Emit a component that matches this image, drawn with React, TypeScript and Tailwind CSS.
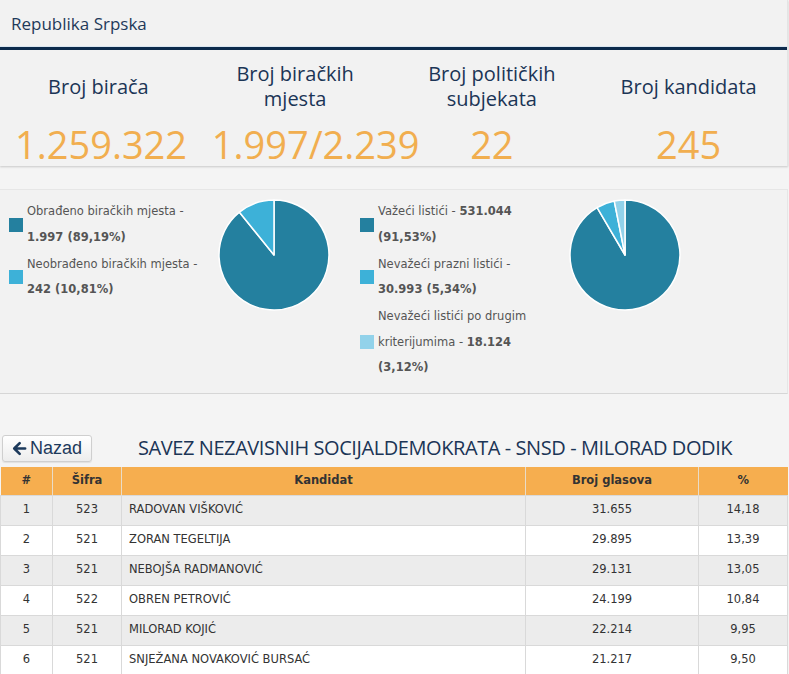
import React from "react";

type Slice = { v: number; c: string };

function Pie({ slices }: { slices: Slice[] }) {
  const cx = 56, cy = 56, r = 55;
  let a = -Math.PI / 2;
  const total = slices.reduce((s, x) => s + x.v, 0);
  const paths = slices.map((s, i) => {
    const da = (s.v / total) * Math.PI * 2;
    const x0 = cx + r * Math.cos(a), y0 = cy + r * Math.sin(a);
    const a1 = a + da;
    const x1 = cx + r * Math.cos(a1), y1 = cy + r * Math.sin(a1);
    const large = da > Math.PI ? 1 : 0;
    a = a1;
    return (
      <path
        key={i}
        d={`M${cx} ${cy} L${x0.toFixed(3)} ${y0.toFixed(3)} A${r} ${r} 0 ${large} 1 ${x1.toFixed(3)} ${y1.toFixed(3)} Z`}
        fill={s.c}
        stroke="#ffffff"
        strokeWidth={1.5}
        strokeLinejoin="round"
      />
    );
  });
  return (
    <svg width={112} height={112} viewBox="0 0 112 112" className="shrink-0">
      {paths}
    </svg>
  );
}

function LegendItem({ color, children }: { color: string; children: React.ReactNode }) {
  return (
    <div className="flex items-center">
      <div className="w-[14px] h-[14px] shrink-0" style={{ background: color }} />
      <div className="ml-[4px] leading-[25.5px]">{children}</div>
    </div>
  );
}

const rows = [
  ["1", "523", "RADOVAN VIŠKOVIĆ", "31.655", "14,18"],
  ["2", "521", "ZORAN TEGELTIJA", "29.895", "13,39"],
  ["3", "521", "NEBOJŠA RADMANOVIĆ", "29.131", "13,05"],
  ["4", "522", "OBREN PETROVIĆ", "24.199", "10,84"],
  ["5", "521", "MILORAD KOJIĆ", "22.214", "9,95"],
  ["6", "521", "SNJEŽANA NOVAKOVIĆ BURSAĆ", "21.217", "9,50"],
];

const DARK = "#24809f";
const MID = "#3db1d8";
const LIGHT = "#92d2ea";

export default function App() {
  const stats = [
    { label: ["Broj birača"], value: "1.259.322" },
    { label: ["Broj biračkih", "mjesta"], value: "1.997/2.239" },
    { label: ["Broj političkih", "subjekata"], value: "22" },
    { label: ["Broj kandidata"], value: "245" },
  ];
  return (
    <div className="w-[789px] h-[674px] overflow-hidden bg-[#f4f4f4] font-['Open_Sans',sans-serif]">
      {/* Top panel */}
      <div className="w-[788px] h-[166px] bg-[#f2f2f2] border-r border-[#e4e4e4] shadow-[0_1px_2px_rgba(0,0,0,0.18)]">
        <div className="h-[47px] flex items-center pl-[11px] pt-[2px] border-b border-[#dbe6f0]">
          <span className="text-[17px] text-[#1f3a5a]">Republika Srpska</span>
        </div>
        <div className="h-[3px] bg-[#0d2b4c]" />
        <div className="grid grid-cols-4 pt-[11px]">
          {stats.map((s, i) => (
            <div key={i} className="px-[15px] text-center">
              <div className="h-[50px] flex flex-col items-center justify-center text-[20px] leading-[25px] text-[#1b3556]">
                {s.label.map((l, j) => (
                  <div key={j}>{l}</div>
                ))}
              </div>
              <div className="mt-[13px] text-[38px] leading-[40px] text-[#f1ae4f] whitespace-nowrap">{s.value}</div>
            </div>
          ))}
        </div>
      </div>

      {/* Charts panel */}
      <div className="mt-[23px] w-[788px] h-[205px] bg-[#f2f2f2] border border-[#e6e6e6] border-l-0 border-b-[#d6d6d6] flex items-start pt-[9px] pl-[9px] font-['DejaVu_Sans',Verdana,sans-serif] text-[11.5px] text-[#555555]">
        <div className="w-[209px] flex flex-col gap-[1.5px]">
          <LegendItem color={DARK}>
            <div>Obrađeno biračkih mjesta -</div>
            <div className="font-bold">1.997 (89,19%)</div>
          </LegendItem>
          <LegendItem color={MID}>
            <div>Neobrađeno biračkih mjesta -</div>
            <div className="font-bold">242 (10,81%)</div>
          </LegendItem>
        </div>
        <Pie slices={[{ v: 89.19, c: DARK }, { v: 10.81, c: MID }]} />
        <div className="ml-[30px] w-[209px] flex flex-col gap-[1.5px]">
          <LegendItem color={DARK}>
            <div>
              Važeći listići - <span className="font-bold">531.044</span>
            </div>
            <div className="font-bold">(91,53%)</div>
          </LegendItem>
          <LegendItem color={MID}>
            <div>Nevažeći prazni listići -</div>
            <div className="font-bold">30.993 (5,34%)</div>
          </LegendItem>
          <LegendItem color={LIGHT}>
            <div>Nevažeći listići po drugim</div>
            <div>
              kriterijumima - <span className="font-bold">18.124</span>
            </div>
            <div className="font-bold">(3,12%)</div>
          </LegendItem>
        </div>
        <Pie slices={[{ v: 91.53, c: DARK }, { v: 5.34, c: MID }, { v: 3.12, c: LIGHT }]} />
      </div>

      {/* Table section */}
      <div className="mt-[39px] flex items-center pl-[2px]">
        <button className="h-[27px] w-[90px] flex items-center justify-center gap-[3px] rounded-[3px] border border-[#cfcfcf] bg-gradient-to-b from-[#ffffff] to-[#ededed] text-[18px] text-[#1d3a5c] font-['Liberation_Sans',Arial,sans-serif] shadow-[0_1px_1px_rgba(0,0,0,0.08)]">
          <svg width="15" height="15" viewBox="0 0 16 16" className="mt-[1px]">
            <path d="M8.2 2.2 L2.4 8 L8.2 13.8 M2.6 8 H14" fill="none" stroke="#1d3a5c" strokeWidth="2.8" strokeLinecap="round" strokeLinejoin="round" />
          </svg>
          <span>Nazad</span>
        </button>
        <div className="ml-[46px] text-[20px] text-[#1b3556] whitespace-nowrap font-['Open_Sans',sans-serif] tracking-[-0.42px]">
          SAVEZ NEZAVISNIH SOCIJALDEMOKRATA - SNSD - MILORAD DODIK
        </div>
      </div>

      <table className="mt-[4px] w-[787px] border-collapse table-fixed font-['DejaVu_Sans',Verdana,sans-serif] text-[11.5px] text-[#333333]">
        <colgroup>
          <col className="w-[52px]" />
          <col className="w-[69px]" />
          <col className="w-[404px]" />
          <col className="w-[173px]" />
          <col className="w-[89px]" />
        </colgroup>
        <thead>
          <tr className="h-[28px] bg-[#f6ae4f] text-[#333333]">
            <th className="font-bold border-r border-[#e9dcc8]">#</th>
            <th className="font-bold border-r border-[#e9dcc8]">Šifra</th>
            <th className="font-bold border-r border-[#e9dcc8]">Kandidat</th>
            <th className="font-bold border-r border-[#e9dcc8]">Broj glasova</th>
            <th className="font-bold">%</th>
          </tr>
        </thead>
        <tbody>
          {rows.map((r, i) => (
            <tr key={i} className={`h-[30px] ${i % 2 === 0 ? "bg-[#ececec]" : "bg-[#ffffff]"}`}>
              <td className="text-center border border-[#d9d9d9]">{r[0]}</td>
              <td className="text-center border border-[#d9d9d9]">{r[1]}</td>
              <td className="pl-[7px] border border-[#d9d9d9]">{r[2]}</td>
              <td className="text-center border border-[#d9d9d9]">{r[3]}</td>
              <td className="text-center border border-[#d9d9d9]">{r[4]}</td>
            </tr>
          ))}
        </tbody>
      </table>
    </div>
  );
}
